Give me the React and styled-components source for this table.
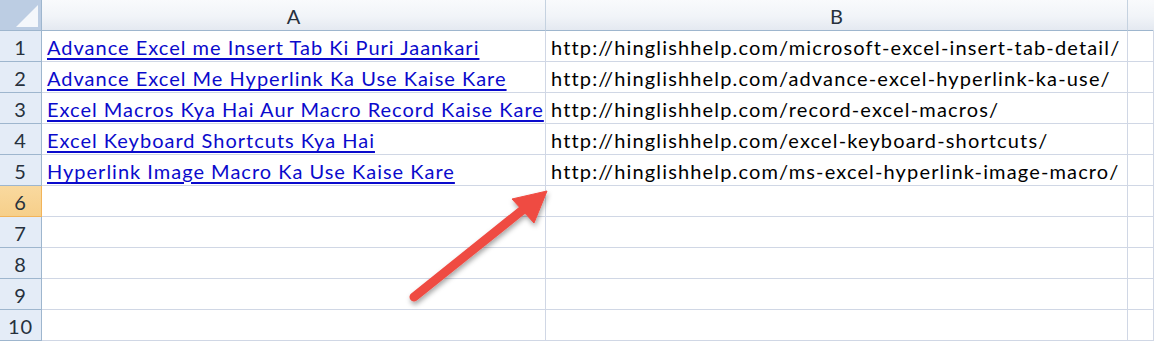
import React from "react";
import styled, { createGlobalStyle } from "styled-components";

const Global = createGlobalStyle`
  html, body { margin: 0; padding: 0; background: #fff; }
  body { width: 1154px; height: 343px; overflow: hidden; }
`;

const Sheet = styled.div`
  position: relative;
  width: 1154px;
  height: 343px;
  overflow: hidden;
  display: grid;
  grid-template-columns: 42px 504px 582px 1fr;
  grid-auto-rows: 31px;
  font-family: Lato, "Open Sans", sans-serif;
`;

const Corner = styled.div`
  background: #bccde3;
  border-right: 1px solid #9eb6ce;
  border-bottom: 1px solid #9eb6ce;
  position: relative;
  overflow: hidden;
  &::after {
    content: "";
    position: absolute;
    right: 3px;
    bottom: 3px;
    width: 0;
    height: 0;
    border-left: 22px solid transparent;
    border-bottom: 22px solid #f4f7fb;
  }
`;

const ColHead = styled.div`
  background: linear-gradient(#f9fafc 0%, #f1f4f8 55%, #e4e9f1 100%);
  border-right: 1px solid ${(p) => (p.$last ? "transparent" : "#c5d2e0")};
  border-bottom: 1px solid #9eb6ce;
  display: flex;
  align-items: center;
  justify-content: center;
  color: #27313d;
  font-size: 20px;
  padding-top: 2px;
  box-sizing: border-box;
`;

const RowHead = styled.div`
  background: ${(p) =>
    p.$active ? "linear-gradient(#f9d99f, #f6cf8a)" : "#e4ecf7"};
  border-right: 1px solid ${(p) => (p.$active ? "#f2b45a" : "#9eb6ce")};
  border-bottom: 1px solid ${(p) => (p.$active ? "#f2b45a" : "#9eb6ce")};
  display: flex;
  align-items: center;
  justify-content: center;
  color: #27313d;
  font-size: 20px;
  letter-spacing: 1px;
  padding-top: 2px;
  box-sizing: border-box;
`;

const Cell = styled.div`
  border-right: 1px solid #d0d7e5;
  border-bottom: 1px solid #d0d7e5;
  display: flex;
  align-items: center;
  padding: 2px 0 0 5px;
  box-sizing: border-box;
  font-size: 20px;
  letter-spacing: ${(p) => p.$spacing || "1px"};
  color: #000;
  white-space: nowrap;
  overflow: visible;
`;

const Link = styled.a`
  color: #0a0acc;
  text-decoration: underline;
  text-underline-offset: 3px;
  text-decoration-thickness: 2px;
`;

const Arrow = styled.svg`
  position: absolute;
  left: 0;
  top: 0;
  pointer-events: none;
`;

const rows = [
  ["Advance Excel me Insert Tab Ki Puri Jaankari", "http://hinglishhelp.com/microsoft-excel-insert-tab-detail/"],
  ["Advance Excel Me Hyperlink Ka Use Kaise Kare", "http://hinglishhelp.com/advance-excel-hyperlink-ka-use/"],
  ["Excel Macros Kya Hai Aur Macro Record Kaise Kare", "http://hinglishhelp.com/record-excel-macros/"],
  ["Excel Keyboard Shortcuts Kya Hai", "http://hinglishhelp.com/excel-keyboard-shortcuts/"],
  ["Hyperlink Image Macro Ka Use Kaise Kare", "http://hinglishhelp.com/ms-excel-hyperlink-image-macro/"],
];

export default function App() {
  const all = [];
  for (let i = 0; i < 10; i++) all.push(rows[i] || null);
  return (
    <>
      <Global />
      <Sheet>
        <Corner />
        <ColHead>A</ColHead>
        <ColHead>B</ColHead>
        <ColHead $last />
        {all.map((r, i) => (
          <React.Fragment key={i}>
            <RowHead $active={i === 5}>{i + 1}</RowHead>
            <Cell>{r && <Link href="#">{r[0]}</Link>}</Cell>
            <Cell $spacing="1.15px">{r && r[1]}</Cell>
            <Cell />
          </React.Fragment>
        ))}
        <Arrow width="1154" height="343" viewBox="0 0 1154 343">
          <defs>
            <filter id="sh" x="-20%" y="-20%" width="140%" height="140%">
              <feDropShadow dx="1" dy="3" stdDeviation="2.5" floodColor="#000" floodOpacity="0.35" />
            </filter>
          </defs>
          <g filter="url(#sh)" fill="#ef4b43" stroke="#ef4b43">
            <line x1="414" y1="297" x2="525" y2="208" strokeWidth="9" strokeLinecap="round" />
            <polygon points="547,191 512,199 534,223" strokeWidth="1" strokeLinejoin="round" />
          </g>
        </Arrow>
      </Sheet>
    </>
  );
}
